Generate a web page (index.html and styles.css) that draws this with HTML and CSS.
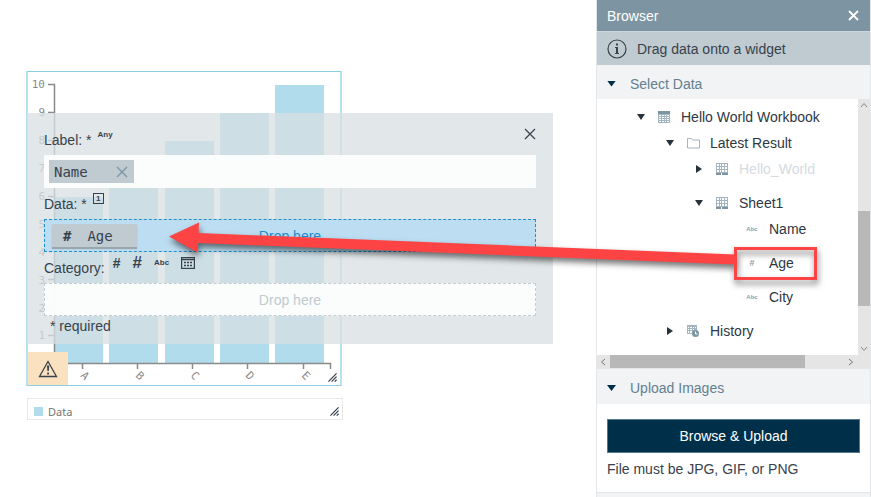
FILE: index.html
```html
<!DOCTYPE html>
<html lang="en">
<head>
<meta charset="utf-8">
<title>Browser</title>
<link rel="stylesheet" href="styles.css">
</head>
<body>
<svg width="0" height="0" class="defs" aria-hidden="true">
  <symbol id="grip" viewBox="0 0 10 10"><path d="M0.500 9.500 9.500 0.500M4 9.500 9.500 4M7.500 9.500 9.500 7.500" stroke="#2d3a44" stroke-width="1.300" fill="none"/></symbol>
  <symbol id="workbook" viewBox="0 0 12 12"><path d="M0 0h12v12H0z" fill="#a3b6c0"/><path d="M0 0h12v3H0z" fill="#7d95a2"/><path d="M1 4h2v1H1zM4 4h2v1H4zM7 4h1v1H7zM9 4h2v1H9zM1 6h2v1H1zM4 6h2v1H4zM7 6h1v1H7zM9 6h2v1H9zM1 8h2v1H1zM4 8h2v1H4zM7 8h1v1H7zM9 8h2v1H9zM1 10h2v1H1zM4 10h2v1H4zM7 10h1v1H7zM9 10h2v1H9z" fill="#fff"/></symbol>
  <symbol id="sheet" viewBox="0 0 12 12"><path d="M0 0h12v12H0z" fill="#a3b6c0"/><path d="M1 1h2v2H1zM4 1h1v2H4zM6 1h2v2H6zM9 1h2v2H9zM1 4h2v2H1zM4 4h1v2H4zM6 4h2v2H6zM9 4h2v2H9zM1 7h2v2H1zM4 7h1v2H4zM6 7h2v2H6zM9 7h2v2H9zM5 10h1v2H5z" fill="#fff"/><path d="M0 10h5v2H0zM6 10h6v2H6z" fill="#7d95a2"/></symbol>
</svg>
<main class="canvas">
  <section class="widget chart" aria-label="Chart">
    <svg class="plot" viewBox="1 1 312 313" role="img" aria-label="Bar chart">
      <g fill="#b0dceb">
        <rect x="27" y="126" width="49" height="166"/>
        <rect x="82" y="97" width="49" height="195"/>
        <rect x="138" y="70" width="49" height="222"/>
        <rect x="193" y="42" width="49" height="250"/>
        <rect x="248" y="14" width="49" height="278"/>
      </g>
      <path d="M21 13.500H27.500V298M21 41.500h6M21 69.500h6M21 97.500h6M21 125.500h6M21 153.500h6M21 180.500h6M21 208.500h6M21 236.500h6M21 264.500h6M27 292.500H303.500V298M55.500 292v6M110.500 292v6M165.500 292v6M220.500 292v6M276.500 292v6" fill="none" stroke="#8a8a8a" stroke-width="1.500"/>
      <g class="tick" text-anchor="end">
        <text x="18" y="17">10</text><text x="18" y="45">9</text><text x="18" y="73">8</text><text x="18" y="101">7</text><text x="18" y="129">6</text><text x="18" y="157">5</text><text x="18" y="185">4</text><text x="18" y="213">3</text><text x="18" y="241">2</text><text x="18" y="268">1</text>
      </g>
      <g class="tick">
        <text transform="translate(53 305) rotate(45)">A</text><text transform="translate(108 305) rotate(45)">B</text><text transform="translate(163 305) rotate(45)">C</text><text transform="translate(218 305) rotate(45)">D</text><text transform="translate(274 305) rotate(45)">E</text>
      </g>
    </svg>
    <div class="warning"><svg width="20" height="18" viewBox="0 0 20 18" aria-label="Warning"><path d="M10 1.500 18.500 16.500H1.500z" fill="none" stroke="#37424c" stroke-width="1.300"/><path d="M9 5.500h2.200l-.4 5.500H9.400zM9.200 12.500h1.800v2H9.200z" fill="#37424c"/></svg></div>
    <svg class="grip"><use href="#grip"/></svg>
  </section>
  <section class="widget legend">
    <span class="swatch"></span><span>Data</span>
    <svg class="grip"><use href="#grip"/></svg>
  </section>
  <section class="bindings" aria-label="Data bindings">
    <button class="close" aria-label="Close"><svg width="12" height="12" viewBox="0 0 12 12"><path d="M1 1l10 10M11 1 1 11" stroke="#3a444d" stroke-width="1.300"/></svg></button>
    <div class="caption">Label: *<span class="types"><b class="type">Any</b></span></div>
    <div class="field">
      <span class="chip">Name <button aria-label="Remove Name"><svg width="12" height="12" viewBox="0 0 12 12"><path d="M1 1l10 10M11 1 1 11" stroke="#7d95a2" stroke-width="1.300"/></svg></button></span>
    </div>
    <div class="caption">Data: *<span class="types"><b class="type boxed">1</b></span></div>
    <div class="field drop active">
      <span class="chip raised"><b>#</b>Age</span>
      <span class="hint">Drop here</span>
    </div>
    <div class="caption">Category:<span class="types wide"><b class="hash">#</b><b class="hash large">#</b><b class="type">Abc</b><svg width="14" height="12" viewBox="0 0 14 12"><rect x=".6" y=".6" width="12.800" height="10.800" fill="none" stroke="#37424c" stroke-width="1.200"/><path d="M0 2.500h14" stroke="#37424c" stroke-width="1.500"/><path d="M3 5.500h2M6 5.500h2M9 5.500h2M3 8.500h2M6 8.500h2M9 8.500h2" stroke="#37424c" stroke-width="1.500"/></svg></span></div>
    <div class="field drop"><span class="hint">Drop here</span></div>
    <div class="note">* required</div>
  </section>
</main>
<aside class="browser">
  <header class="title"><span>Browser</span><button aria-label="Close browser"><svg width="11" height="11" viewBox="0 0 11 11"><path d="M1 1l9 9M10 1 1 10" stroke="#fff" stroke-width="1.800"/></svg></button></header>
  <div class="info"><svg width="20" height="20" viewBox="0 0 20 20"><circle cx="10" cy="10" r="9" fill="none" stroke="#37424c" stroke-width="1.200"/><path d="M9 4.500h2v2H9zM8 8h3v6h1v1H8v-1h1V9H8z" fill="#37424c"/></svg>Drag data onto a widget</div>
  <h2 class="section"><i class="caret navy"></i>Select Data</h2>
  <div class="panel">
    <ul class="tree">
      <li><div class="row"><button class="caret" aria-label="Collapse"></button><svg class="icon"><use href="#workbook"/></svg>Hello World Workbook</div>
        <ul>
          <li><div class="row"><button class="caret" aria-label="Collapse"></button><svg class="icon" viewBox="0 0 12 12"><path d="M.5 11V1.500h4l1 1.500h7v8z" fill="none" stroke="#a3b6c0"/></svg>Latest Result</div>
            <ul>
              <li><div class="row spaced muted"><button class="caret closed" aria-label="Expand"></button><svg class="icon"><use href="#sheet"/></svg>Hello_World</div></li>
              <li><div class="row"><button class="caret" aria-label="Collapse"></button><svg class="icon"><use href="#sheet"/></svg>Sheet1</div>
                <ul>
                  <li><div class="row leaf spaced"><b class="icon">Abc</b>Name</div></li>
                  <li><div class="row leaf spaced"><b class="icon number">#</b>Age
                    <svg class="callout" width="653" height="66" viewBox="0 0 653 66" aria-hidden="true">
                      <path d="M2 23.500 32 9.500 31.500 20 568 41.500V51.500L31 30 30.500 39.500z" fill="#fd4343"/>
                      <path d="M568.500 35.500h80v30h-80z" fill="none" stroke="#fd4343" stroke-width="3"/>
                    </svg></div></li>
                  <li><div class="row leaf spaced"><b class="icon">Abc</b>City</div></li>
                </ul>
              </li>
            </ul>
          </li>
          <li><div class="row"><button class="caret closed" aria-label="Expand"></button><svg class="icon" viewBox="0 0 12 12"><path d="M0 0h10v9H0z" fill="#a3b6c0"/><path d="M1 2h1v1H1zM3 2h2v1H3zM6 2h1v1H6zM8 2h1v1H8zM1 4h1v1H1zM3 4h2v1H3zM6 4h1v1H6zM1 6h1v2H1zM3 6h2v2H3z" fill="#fff"/><circle cx="8.500" cy="8.500" r="3.500" fill="#7d95a2"/><path d="M8.500 6.500v2.500h2" fill="none" stroke="#fff"/></svg>History</div></li>
        </ul>
      </li>
    </ul>
    <div class="bar vertical"><svg width="8" height="6"><path d="M1 5l3-3.500L7 5" fill="none" stroke="#888"/></svg><i class="thumb"></i><svg width="8" height="6"><path d="M1 1l3 3.500L7 1" fill="none" stroke="#888"/></svg></div>
    <div class="bar horizontal"><svg width="6" height="8"><path d="M5 1 1.500 4 5 7" fill="none" stroke="#777"/></svg><i class="thumb"></i><svg width="6" height="8"><path d="M1 1l3.500 3L1 7" fill="none" stroke="#777"/></svg></div>
  </div>
  <h2 class="section upload"><i class="caret navy"></i>Upload Images</h2>
  <div class="uploader">
    <button class="primary">Browse &amp; Upload</button>
    <p>File must be JPG, GIF, or PNG</p>
  </div>
  <div class="rest"></div>
</aside>
</body>
</html>
```
FILE: styles.css
```css
* { box-sizing: border-box; }
body {
  margin: 0;
  height: 100vh;
  display: flex;
  overflow: hidden;
  background: #fff;
  color: #37424c;
  font: 14px/16px "Liberation Sans", Arial, sans-serif;
}
button { padding: 0; border: 0; background: none; font: inherit; color: inherit; }
svg { flex: none; display: block; }
ul { list-style: none; margin: 0; padding: 0; }
.defs { position: absolute; }

/* Canvas: freely placed widgets */
.canvas { flex: 1; position: relative; }
.widget { position: absolute; left: 27px; background: #fff; }
.chart {
  left: 26px; top: 71px; width: 316px;
  border: solid #b5e1f0;
  border-width: 1px 2px;
  border-top-color: #8ccde6;
  border-bottom-color: #8ccde6;
}
.plot { width: 100%; }
.tick { font: 11px "DejaVu Sans Mono", monospace; fill: #8a8a8a; }
.warning {
  position: absolute; left: 0; bottom: 0;
  width: 40px; height: 33px;
  display: grid; place-items: center;
  background: #fae1bf;
}
.grip { position: absolute; right: 3px; bottom: 3px; width: 9px; height: 9px; }
.legend {
  top: 398px; width: 316px; height: 22px;
  display: flex; align-items: center; gap: 5px;
  padding: 4px 6px 0;
  border: 1px solid #e8e8e8;
  color: #757575;
  font: 11px "Noto Sans", sans-serif;
}
.swatch { width: 9px; height: 9px; background: #b0dceb; }

/* Binding popup */
.bindings {
  position: absolute; left: 27px; top: 113px;
  width: 526px;
  padding: 11px 17px 9px;
  background: rgba(216, 223, 227, .75);
}
.close { position: absolute; right: 17px; top: 15px; }
.caption { height: 31px; display: flex; align-items: center; }
.types { display: flex; align-items: center; gap: 12px; margin: 0 0 10px 6px; }
.types.wide { margin-left: 8px; }
.type { font: bold 8px/10px "Liberation Sans Narrow", "Liberation Sans", sans-serif; }
.boxed { width: 11px; height: 11px; line-height: 9px; text-align: center; border: 1px solid #37424c; }
.hash { font-size: 14px; }
.hash.large { font-size: 17px; }
.field {
  height: 33px;
  display: flex; align-items: center;
  position: relative;
  padding: 0 5px;
  background: rgba(252, 254, 253, .95);
}
.drop { border: 1px dashed #c3ccd2; justify-content: center; }
.drop.active { background: #bddef2; border-color: #1f8fce; }
.hint { color: #bfcad1; }
.active .hint { color: #1b8fd2; }
.chip {
  width: 85px; height: 23px;
  display: flex; align-items: center; justify-content: space-between;
  padding: 0 6px 0 5px;
  background: #bfcad1;
  font: 14px "DejaVu Sans Mono", monospace;
}
.raised {
  position: absolute; left: 7px;
  justify-content: flex-start; gap: 16px;
  padding-left: 11px;
  box-shadow: 0 2px 1px #9aa7af;
}
.note { padding: 1px 6px 0; line-height: 18px; }

/* Browser sidebar */
.browser {
  width: 275px;
  display: flex; flex-direction: column;
  border: solid #e3e7ea;
  border-width: 0 1px;
}
.title, .info, .section { display: flex; align-items: center; padding: 0 11px 0 10px; }
.title { height: 31px; justify-content: space-between; background: #7d95a2; color: #fff; }
.info { height: 34px; gap: 10px; background: #bfcad1; border-top: 1px solid #cdd6db; }
.section {
  height: 34px; margin: 0; gap: 14px;
  padding-top: 3px;
  background: #f1f3f5;
  color: #64808f;
  font-size: 14px; font-weight: normal;
}
.upload { height: 36px; border-top: 1px solid #e3e7ea; }
.caret {
  width: 8px; height: 6px; flex: none;
  background: #26323c;
  clip-path: polygon(0 0, 100% 0, 50% 100%);
}
.navy { background: #002f49; width: 9px; }
.closed { width: 6px; height: 8px; margin: 0 1px; clip-path: polygon(0 0, 100% 50%, 0 100%); }
.panel { display: grid; grid-template-columns: 1fr 12px; grid-template-rows: auto 13px; }
.tree { padding: 5px 0 11px 40px; }
.tree ul { padding-left: 29px; }
.row { height: 26px; display: flex; align-items: center; color: #2d3843; white-space: nowrap; }
.row .caret { margin-right: 13px; }
.row .closed { margin-right: 14px; }
.icon { width: 12px; height: 12px; margin-right: 11px; flex: none; overflow: visible; }
.spaced { margin-bottom: 8px; }
.muted { color: #d5dbdf; }
.leaf { position: relative; padding-left: 22px; }
b.icon { font: bold 6px/12px "Liberation Sans Narrow", "Liberation Sans", sans-serif; color: #8ba1ad; text-align: center; }
b.number { font-size: 9px; }
.callout {
  position: absolute; right: 38px; top: -37px;
  overflow: visible; pointer-events: none;
  filter: drop-shadow(1px 4px 3px rgba(0, 0, 0, .55));
}
.bar { display: flex; align-items: center; justify-content: space-between; background: #e5e5e5; }
.thumb { background: #b8b8b8; }
.vertical { flex-direction: column; padding: 3px 0; }
.vertical .thumb { width: 12px; height: 38%; margin-top: 62px; }
.horizontal { grid-column: 1 / 3; padding: 0 16px 0 3px; }
.horizontal .thumb { height: 13px; width: 195px; margin: 0 auto 0 4px; }
.uploader { padding: 15px 10px; }
.primary { width: 100%; height: 34px; background: #002f49; border: 1px solid #54788d; color: #fff; }
.uploader p { margin: 8px 0 0; }
.rest { flex: 1; background: #f1f3f5; border-top: 1px solid #e3e7ea; }
```
